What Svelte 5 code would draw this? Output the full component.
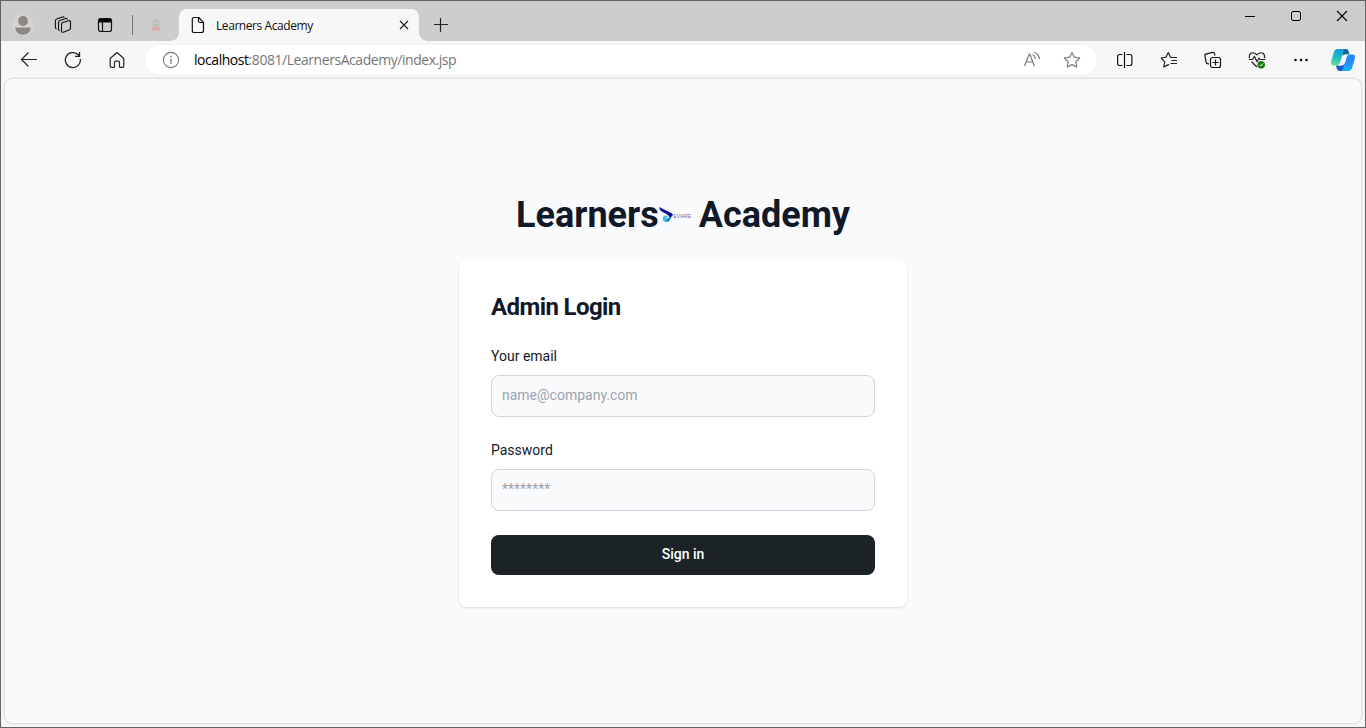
<script>
  let email = $state('');
  let password = $state('');
</script>

<div class="window">
  <header class="tabstrip">
    <div class="cell profile">
      <svg width="22" height="22" viewBox="0 0 22 22">
        <circle cx="11" cy="11" r="10.8" fill="#d5d3cf" />
        <circle cx="11" cy="7" r="5" fill="#8b8885" />
        <path d="M3.300 13.600H18.700C18.500 18.400 15 20.800 11 20.800S3.500 18.400 3.300 13.600Z" fill="#8b8885" />
      </svg>
    </div>
    <div class="cell spaces">
      <svg width="18" height="18" viewBox="0 0 18 18" fill="none" stroke="#111" stroke-width="1.100" stroke-linejoin="round" stroke-linecap="round">
        <path d="M8.600 6.500L14.500 4.700Q16.500 4.300 16.500 6V12.200Q16.500 13.200 15.600 13.700L9.400 16.200Q7.500 16.700 7.500 15V8Q7.500 6.900 8.600 6.500Z" />
        <path d="M13.300 2.900Q12.900 2.200 11.700 2.500L5.800 4.600Q4.500 5.100 4.500 6.500V13.200Q4.500 14.200 5.300 14.600" />
        <path d="M10 1.200Q9.500.7 8.600 1L2.700 3.100Q1.400 3.600 1.400 5V11.300Q1.400 12.200 2.200 12.700" />
      </svg>
    </div>
    <div class="cell tabs">
      <svg width="16" height="16" viewBox="0 0 16 16" fill="none" stroke="#111">
        <rect x="1.500" y="1.500" width="13" height="13" rx="2.300" stroke-width="1.200" />
        <path d="M1.500 5V3.500Q1.500 1.500 3.500 1.500H12.500Q14.500 1.500 14.500 3.500V5Z" fill="#000" />
        <path d="M5.500 5V14.500" stroke-width="1.200" />
      </svg>
    </div>
    <i class="divider"></i>
    <div class="pinned">
      <svg width="12" height="14" viewBox="0 0 12 14">
        <g fill="none" stroke="#bababc" stroke-width="1"><circle cx="6" cy="5.500" r="3.500" /><path d="M6 1V8M4 4H8M4 6.500H8" /></g>
        <rect x="2" y="9.500" width="8" height="2.700" fill="#dda4a6" />
        <path d="M3 10.900H9" stroke="#cfb8b9" stroke-dasharray="1 1" />
      </svg>
    </div>
    <div class="tab">
      <svg class="page-icon" width="14" height="18" viewBox="0 0 14 18" fill="none" stroke="#111" stroke-width="1.200" stroke-linejoin="round">
        <path d="M3 1.500H7.700L12.500 6.300V14.500Q12.500 16.500 10.500 16.500H3Q1.300 16.500 1.300 14.700V3.300Q1.300 1.500 3 1.500Z" />
        <path d="M7.500 1.500V5Q7.500 6.500 9 6.500H12.500" />
      </svg>
      <span class="tab-title">Learners Academy</span>
      <svg class="close" width="10" height="10" viewBox="0 0 10 10" stroke="#222" stroke-width="1.200"><path d="M1 1L9 9M9 1L1 9" /></svg>
    </div>
    <svg class="plus" width="16" height="16" viewBox="0 0 16 16" stroke="#222" stroke-width="1.200"><path d="M1 7.500H15M7.500 1V15" /></svg>
    <div class="controls">
      <div><svg width="12" height="12" viewBox="0 0 12 12" stroke="#000"><path d="M1 6.500H11" /></svg></div>
      <div><svg width="12" height="12" viewBox="0 0 12 12" fill="none" stroke="#000"><rect x="1.500" y="1.500" width="9" height="9" rx="1.500" /></svg></div>
      <div><svg width="12" height="12" viewBox="0 0 12 12" stroke="#000" stroke-width="1.100"><path d="M1 1L11 11M11 1L1 11" /></svg></div>
    </div>
  </header>

  <nav class="toolbar">
    <div class="tool"><svg width="18" height="18" viewBox="0 0 18 18" fill="none" stroke="#222" stroke-width="1.200"><path d="M17 8.500H1.500M8.500 1.500L1.500 8.500L8.500 15.500" /></svg></div>
    <div class="tool"><svg width="18" height="18" viewBox="0 0 18 18" fill="none" stroke="#222" stroke-width="1.300"><path d="M16.300 8A7.500 7.500 0 1 1 13.800 3.400L15.500 5M15.500 1V5.300H11" /></svg></div>
    <div class="tool"><svg width="18" height="18" viewBox="0 0 18 18" fill="none" stroke="#222" stroke-width="1.200" stroke-linejoin="round"><path d="M9 1.500L15.300 7Q15.800 7.500 15.800 8.200V14.700Q15.800 16.400 14.500 16.400H12.300Q11.500 16.400 11.500 15.500V11.500Q11.500 10.200 10.400 10.200H7.600Q6.500 10.200 6.500 11.500V15.500Q6.500 16.400 5.700 16.400H3.500Q2.200 16.400 2.200 14.700V8.200Q2.200 7.500 2.700 7Z" /></svg></div>
    <div class="address">
      <svg class="info" width="18" height="18" viewBox="0 0 18 18"><circle cx="9" cy="9" r="7.600" fill="none" stroke="#777" stroke-width="1.100" /><path d="M9 7.700V13" stroke="#777" stroke-width="1.300" /><circle cx="9" cy="5.500" r=".85" fill="#777" /></svg>
      <span class="url"><b>localhost</b>:8081/LearnersAcademy/index.jsp</span>
      <svg class="read" width="18" height="18" viewBox="0 0 18 18" fill="none" stroke="#777" stroke-width="1.200">
        <path d="M1.500 15L6.300 3H6.900L11.300 15M3.300 11H9.800M9.700 3.500Q12.300 5 12.500 8M11.400 1.300Q15.800 3.200 16.500 8.200" />
      </svg>
      <svg class="fav" width="18" height="18" viewBox="0 0 18 18" fill="none" stroke="#777" stroke-width="1.200" stroke-linejoin="round"><path d="M9 1.600L11.300 6.200L16.600 7L12.800 10.800L13.700 16L9 13.600L4.300 16L5.200 10.800L1.400 7L6.700 6.200Z" /></svg>
    </div>
    <div class="tool split"><svg width="18" height="18" viewBox="0 0 18 18" fill="none" stroke="#111" stroke-width="1.200"><path d="M6.500 3.500H3.500Q1.600 3.500 1.600 5.400V12.600Q1.600 14.500 3.500 14.500H6.500M10.500 3.500H14Q15.900 3.500 15.900 5.400V12.600Q15.900 14.500 14 14.500H10.500M8.500 1V17" /></svg></div>
    <div class="tool"><svg width="18" height="18" viewBox="0 0 18 18" fill="none" stroke="#222" stroke-width="1.200" stroke-linejoin="round"><path d="M12.500 6.500L10.500 6.200L8.300 1.600L6 6.200L1.200 7L4.800 10.800L3.800 16L8.300 13.600L9 14M10.500 6.500H17M11.500 9.500H17M10.500 12.500H17" /></svg></div>
    <div class="tool"><svg width="18" height="18" viewBox="0 0 18 18" fill="none" stroke="#111" stroke-width="1.200" stroke-linejoin="round"><path d="M5 13L3.500 12.600Q2.500 12.400 2.200 11.300L.9 5Q.5 3.600 1.900 3.200L8.500 1.400Q10 1 10.400 2.400L11 4.500" /><rect x="6.500" y="6.500" width="10" height="10" rx="2" /><path d="M11.500 8.500V14.500M8.500 11.500H14.500" /></svg></div>
    <div class="tool"><svg width="18" height="18" viewBox="0 0 18 18" fill="none" stroke="#222" stroke-width="1.200" stroke-linejoin="round"><path d="M1.700 7Q.6 4.200 2.900 2.300Q5.900.7 8.900 3.800Q11.900.7 15 2.300Q17.300 4.200 16.200 7M1 8.500H4.500L6.400 5.300L9 10.800L11 7L12 8.500H17M3.500 10.800L9 16" /><circle cx="13.200" cy="13.800" r="3.800" fill="#107c10" stroke="none" /><path d="M11.500 13.800L12.700 15L15 12.500" stroke="#fff" stroke-width="1" /></svg></div>
    <div class="tool"><svg width="18" height="18" viewBox="0 0 18 18" fill="#111"><circle cx="3.500" cy="9" r="1.300" /><circle cx="9" cy="9" r="1.300" /><circle cx="14.500" cy="9" r="1.300" /></svg></div>
    <div class="copilot">
      <svg width="24" height="22" viewBox="0 0 24 22">
        <defs>
          <linearGradient id="ca" x1=".5" y1="0" x2=".3" y2="1"><stop stop-color="#129bdc" /><stop offset=".5" stop-color="#1cb9cc" /><stop offset="1" stop-color="#69de8b" /></linearGradient>
          <linearGradient id="cb" x1=".6" y1="0" x2=".4" y2="1"><stop stop-color="#2488ee" /><stop offset=".5" stop-color="#2590fa" /><stop offset="1" stop-color="#16b4f4" /></linearGradient>
        </defs>
        <path d="M12 0H15.200Q17 0 17.500 2L18.500 5.600H14.500Q12.500 5.800 11.500 7.500Z" fill="#14648c" />
        <path d="M13 22H8.500Q6.600 22 6 20L4.800 16.400H8.500Q11 16.400 12.500 14.500L14.500 15Z" fill="#1958cf" />
        <path d="M6.500 0H14.500Q12.800.7 12 3.500L9.300 13Q8.200 16.400 4.800 16.400H2.700Q-.7 16.400 .2 12.500L2.600 4Q3.700 0 6.500 0Z" fill="url(#ca)" />
        <path d="M17.500 22H10Q11.700 21.500 12.500 18.500L15.300 9Q16.300 5.600 19.400 5.600H21.300Q24.700 5.600 23.800 9.500L21.400 18Q20.300 22 17.500 22Z" fill="url(#cb)" />
        <path d="M11.100 7.500Q12.200 5.600 14.200 5.600H17Q15.900 6.500 15.300 8.500L13.200 15.200Q12.100 16.400 10.500 16.400H7.500Q9 15.500 9.500 13.500Z" fill="#f7f7f7" />
      </svg>
    </div>
  </nav>

  <main>
    <h1>
      <span>Learners</span>
      <svg class="logo" width="32" height="32" viewBox="0 0 32 32">
        <path d="M0 8L11.800 13.700Q14.800 15.200 13.200 17L10.500 18.700Q10 15.800 4.500 13.500Q.7 12 0 8Z" fill="#101394" />
        <path d="M14 16L9.800 22.300Q6.800 23.800 4.300 21.200L7.800 19.700L10.800 18.300Z" fill="#087dcc" />
        <path d="M4 21Q2.800 17.300 6.500 16.200L9.200 17.400L6.700 19.700L8.100 21.100L6.700 22.900Q4.800 22.500 4 21Z" fill="#38c4e4" />
        <text x="14.500" y="18.800" font-size="4.500" textLength="17.500">EVIARE</text>
      </svg>
      <span class="academy">Academy</span>
    </h1>
    <section class="card">
      <h2>Admin Login</h2>
      <form onsubmit={(event) => event.preventDefault()}>
        <label for="email">Your email</label>
        <input id="email" type="email" placeholder="name@company.com" bind:value={email} />
        <label for="password">Password</label>
        <input id="password" type="password" placeholder="********" bind:value={password} />
        <button type="submit">Sign in</button>
      </form>
    </section>
  </main>
</div>

<style>
  :global(body) { margin: 0; overflow: hidden; }
  * { box-sizing: border-box; }
  svg { display: block; flex: none; }
  .window {
    width: 1366px; height: 728px; border: 1px solid #646363;
    background: #f7f7f7; display: flex; flex-direction: column;
    font-family: "Open Sans", "Noto Sans", sans-serif;
  }
  .tabstrip { height: 40px; flex: none; background: #cdcdcd; display: flex; align-items: center; padding-top: 8px; }
  .cell { height: 32px; display: grid; place-items: center; }
  .profile { width: 22px; margin-left: 11px; }
  .spaces { width: 18px; margin-left: 20px; }
  .tabs { width: 16px; margin-left: 25px; }
  .divider { width: 1px; height: 20px; background: #777; margin-left: 19px; }
  .pinned { width: 12px; margin: 0 17px; }
  .tab {
    position: relative; width: 240px; height: 32px; background: #f7f7f7;
    border-radius: 8px 8px 0 0; display: flex; align-items: center; padding: 0 10px 0 12px;
  }
  .tab::before, .tab::after { content: ''; position: absolute; bottom: 0; width: 8px; height: 8px; }
  .tab::before { left: -8px; background: radial-gradient(circle at 0 0, transparent 7.5px, #f7f7f7 8px); }
  .tab::after { right: -8px; background: radial-gradient(circle at 100% 0, transparent 7.5px, #f7f7f7 8px); }
  .tab-title { margin-left: 11px; font-size: 12px; letter-spacing: -.43px; color: #111; white-space: nowrap; }
  .close { margin-left: auto; }
  .plus { margin-left: 14px; }
  .controls { display: flex; align-self: flex-start; margin: -8px 0 0 auto; }
  .controls div { width: 46px; height: 30px; display: grid; place-items: center; }

  .toolbar { height: 37px; flex: none; display: flex; align-items: center; padding-left: 6px; }
  .tool { width: 44px; flex: none; display: grid; place-items: center; }
  .address {
    width: 952px; height: 30px; margin: 1px 0 0 6px; flex: none; display: flex; align-items: center;
    background: #fff; border-radius: 15px; box-shadow: 0 0 2px #00000014; padding: 0 16px 0 17px;
  }
  .url { margin: 0 0 1px 14px; font-size: 14px; letter-spacing: -.45px; color: #767676; white-space: nowrap; }
  .url b { color: #000; font-weight: 400; }
  .read { margin-left: auto; }
  .fav { margin-left: 22px; }
  .split { margin-left: 6px; }
  .copilot { margin-left: 8px; }

  main {
    margin: 1px 4px 4px; flex: 1; background: #f9fafb; border-radius: 8px;
    box-shadow: 0 0 3px #00000040; display: flex; flex-direction: column; align-items: center;
    padding-top: 116px; font-family: Roboto, sans-serif; color: #111827;
  }
  h1 { margin: 0; height: 40px; display: flex; align-items: center; font-size: 36px; line-height: 40px; font-weight: 700; }
  .academy { margin-left: 8px; }
  .logo text { fill: #5b64a2; font-family: "Liberation Sans", sans-serif; font-weight: 400; }
  .card {
    width: 448px; height: 348px; margin-top: 24px; padding: 32px; background: #fff; border-radius: 8px;
    box-shadow: 0 1px 3px #0000001a, 0 1px 2px -1px #0000001a;
  }
  h2 { margin: 0 0 23px; font-size: 24px; line-height: 32px; font-weight: 700; letter-spacing: -.6px; }
  form { display: flex; flex-direction: column; }
  label { font-size: 14px; line-height: 20px; margin-bottom: 9px; }
  input {
    height: 42px; margin: 0 0 23px; padding: 0 10px 2px; border: 1px solid #d1d5db; border-radius: 8px;
    background: #f9fafb; font: 14px Roboto, sans-serif; color: #111827; outline: none;
  }
  input::placeholder { color: #9ca3af; }
  button { height: 40px; margin-top: 1px; border: 0; border-radius: 8px; padding: 0 0 2px; background: #1b2326; color: #fff; font: 500 14px Roboto, sans-serif; }
</style>
